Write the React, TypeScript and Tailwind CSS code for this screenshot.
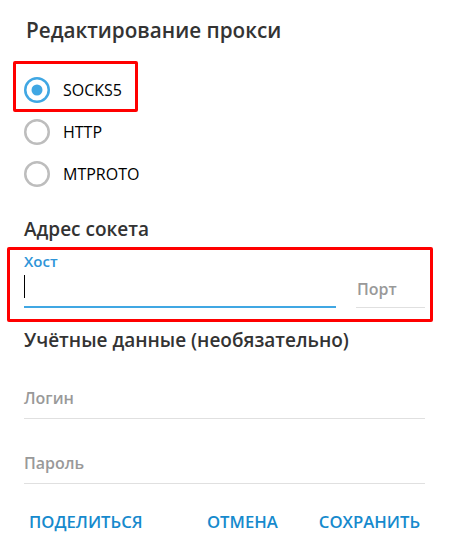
import React from "react";

function Radio({ checked }: { checked: boolean }) {
  return (
    <svg width="26" height="26" viewBox="0 0 26 26" className="shrink-0">
      <circle
        cx="13"
        cy="13"
        r="11.75"
        fill="none"
        stroke={checked ? "#40a7e3" : "#bdbdbd"}
        strokeWidth="2.5"
      />
      {checked && <circle cx="13" cy="13" r="5.5" fill="#40a7e3" />}
    </svg>
  );
}

function RadioRow({ label, checked }: { label: string; checked: boolean }) {
  return (
    <div className="h-[42px] pl-[24px] flex items-center gap-[13px]">
      <Radio checked={checked} />
      <span className="text-[16px] leading-[22px] text-black">{label}</span>
    </div>
  );
}

export default function App() {
  return (
    <div className="w-[450px] h-[555px] bg-white overflow-hidden font-['Open_Sans',sans-serif] flex flex-col">
      <h1 className="pl-[26px] pt-[16px] text-[20.7px] leading-[28px] font-semibold text-[#333]">
        Редактирование прокси
      </h1>

      <div className="relative mt-[24.5px]">
        <RadioRow label="SOCKS5" checked />
        <RadioRow label="HTTP" checked={false} />
        <RadioRow label="MTPROTO" checked={false} />
        <div className="absolute left-[13px] top-[-7.5px] w-[125px] h-[51px] border-[3px] border-[#ff0000] rounded-[2px] pointer-events-none" />
      </div>

      <h2 className="mt-[20.5px] pl-[24px] text-[19px] leading-[28px] font-semibold text-[#333]">
        Адрес сокета
      </h2>

      <div className="relative mt-[8px] pl-[24px] pr-[25px]">
        <div className="text-[15px] leading-[20px] font-semibold text-[#2e95d8]">Хост</div>
        <div className="flex gap-[20px]">
          <div className="w-[312px] h-[37px] border-b-2 border-[#40a7e3] flex items-end pb-[8px]">
            <div className="w-[1px] h-[23px] bg-black" />
          </div>
          <div className="flex-1 h-[37px] border-b border-[#e0e0e0] pt-[7px]">
            <div className="text-[16px] leading-[22px] font-semibold text-[#999] pl-[1px]">Порт</div>
          </div>
        </div>
        <div className="absolute left-[7px] top-[-4px] w-[426px] h-[75px] border-[3px] border-[#ff0000] rounded-[2px] pointer-events-none" />
      </div>

      <h2 className="mt-[18px] pl-[24px] text-[19px] leading-[28px] font-semibold text-[#333]">
        Учётные данные (необязательно)
      </h2>

      <div className="mt-[21px] mx-[25px] ml-[24px] h-[44px] border-b border-[#e0e0e0] pt-[12px]">
        <div className="text-[16px] leading-[22px] font-semibold text-[#999]">Логин</div>
      </div>
      <div className="mt-[21px] mx-[25px] ml-[24px] h-[44px] border-b border-[#e0e0e0] pt-[12px]">
        <div className="text-[16px] leading-[22px] font-semibold text-[#999]">Пароль</div>
      </div>

      <div className="mt-[26.5px] flex pl-[29px] pr-[30px] text-[16.7px] leading-[22px] font-semibold text-[#168acd]">
        <span>ПОДЕЛИТЬСЯ</span>
        <div className="flex-1" />
        <div className="flex gap-[41px]">
          <span>ОТМЕНА</span>
          <span>СОХРАНИТЬ</span>
        </div>
      </div>
    </div>
  );
}
